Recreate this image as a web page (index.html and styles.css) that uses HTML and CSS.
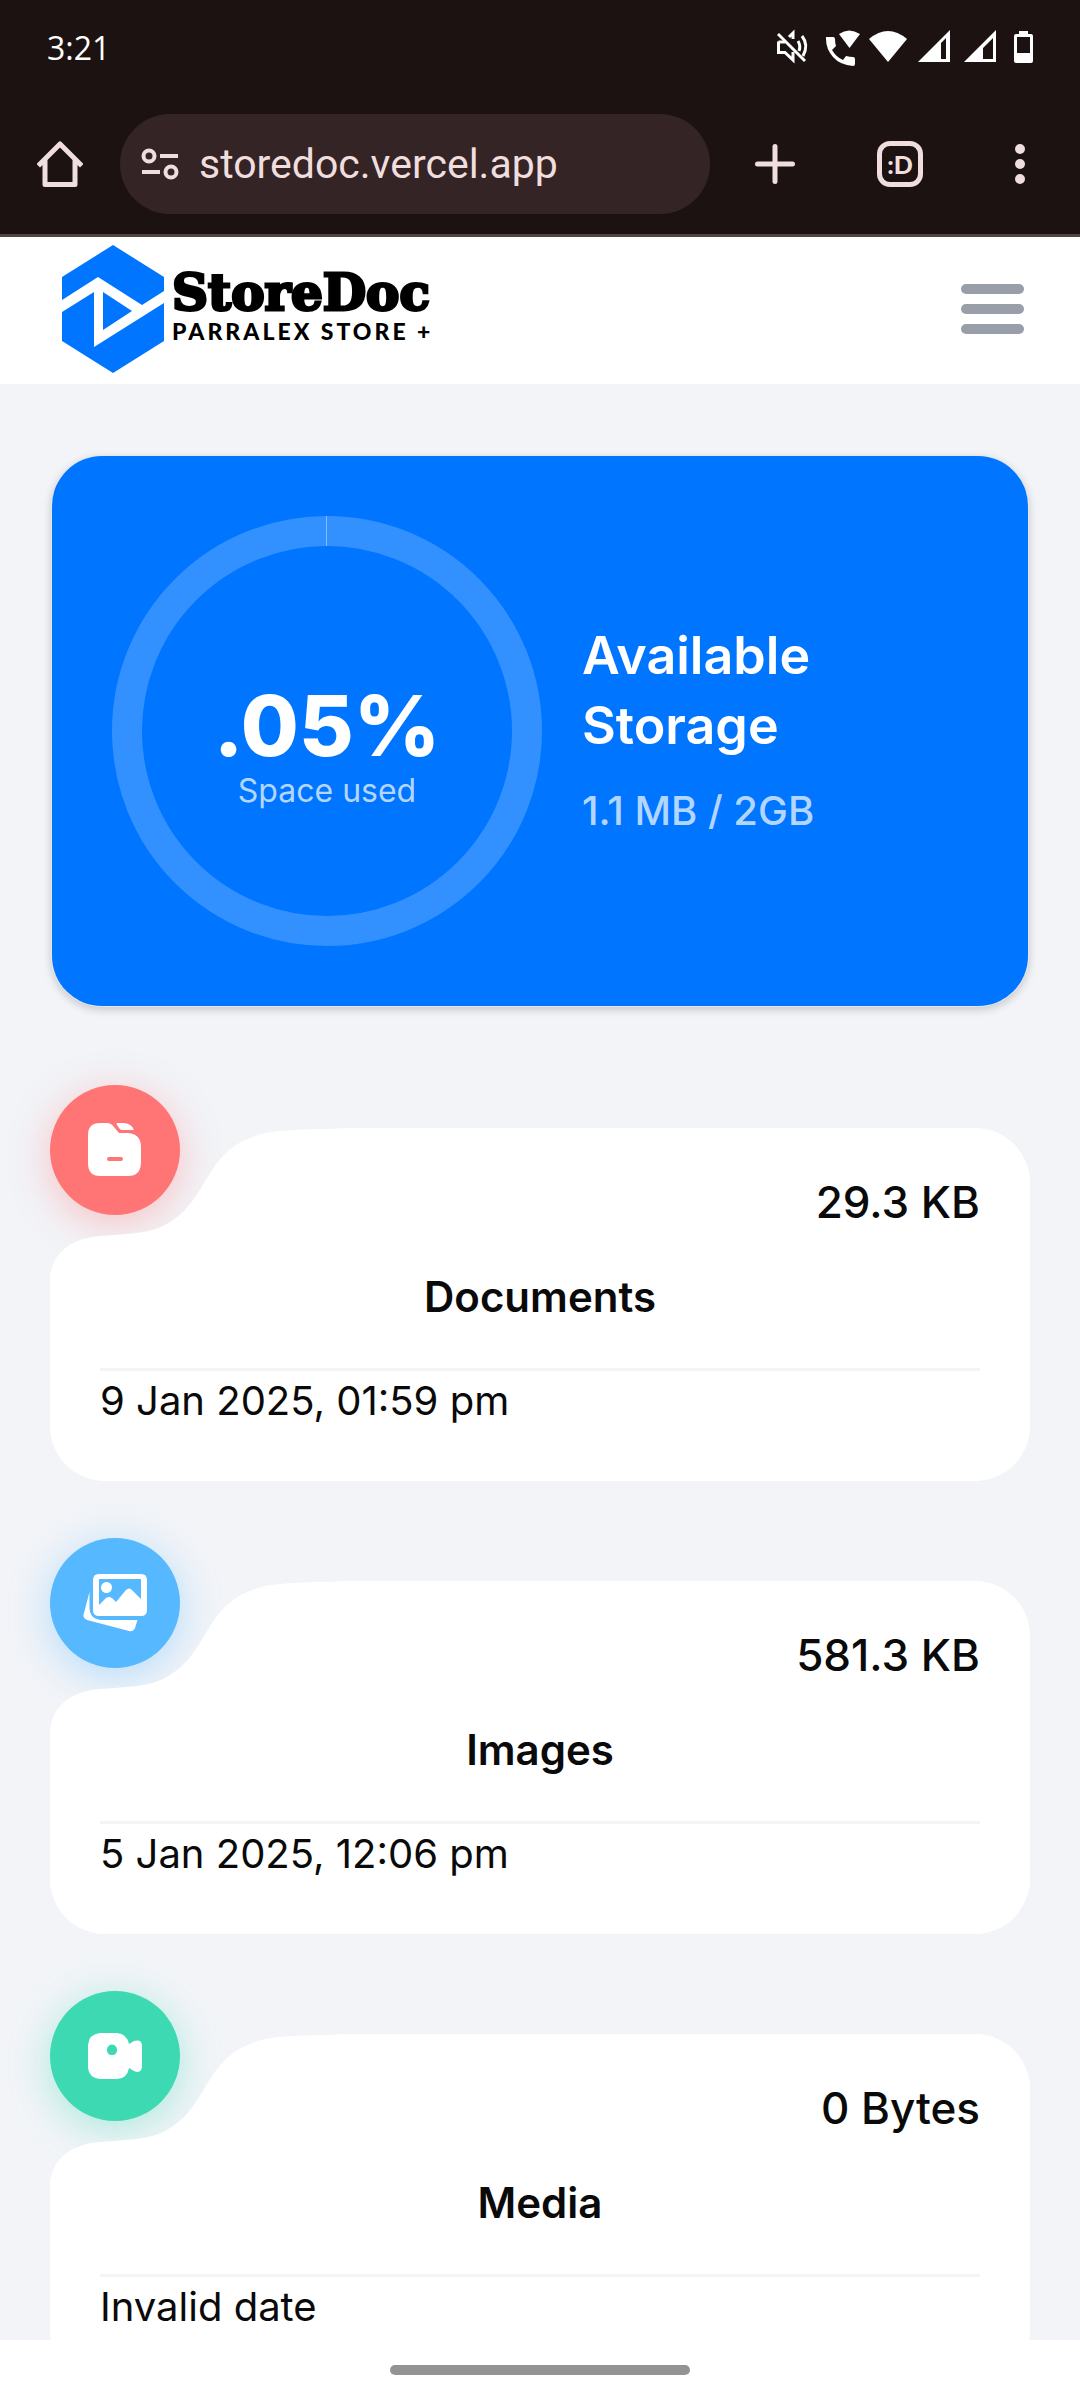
FILE: index.html
```html
<!DOCTYPE html>
<html lang="en">
<head>
<meta charset="utf-8">
<meta name="viewport" content="width=device-width, initial-scale=1">
<title>StoreDoc</title>
<link rel="stylesheet" href="styles.css">
</head>
<body>
<div class="shell">
  <div class="browser">
    <div class="status">
      <span class="clock">3:21</span>
      <svg class="status-icons" width="256" height="38" viewBox="0 0 256 38" fill="#fff" aria-hidden="true">
        <g fill="none" stroke="#fff" stroke-width="3">
          <path d="M1.500 13.500V24.500H8L16 32V24M1.500 14H8M12 9L16 5V11M21 13Q24 18 22 23M25 8Q32 17 26 28"/>
          <path d="M1 6L28 33"/>
        </g>
        <path d="M49 9H56Q58 9 58 11Q58 15 59 18L55 22Q59 29 66 32L69 28Q73 29 76 29Q78 29 78 31V36Q78 38 76 38Q63 37 56 29Q49 21 49 11Z"/>
        <path d="M62 6Q72 -1 83 6L72.500 20Z"/>
        <path d="M92 11Q111 -5 130 11L111 34Z"/>
        <path fill-rule="evenodd" d="M173 2V34H141ZM169 10L164 15V31H169Z"/>
        <path fill-rule="evenodd" d="M219 2V34H187ZM216 10L206 20V31H216Z"/>
        <path fill-rule="evenodd" d="M242 3H251V6H254Q256 6 256 8V33Q256 35 254 35H239Q237 35 237 33V8Q237 6 239 6H242ZM240 9V25H253V9Z"/>
      </svg>
    </div>
    <div class="toolbar">
      <button class="tool home" aria-label="Home">
        <svg width="46" height="46" viewBox="0 0 46 46" fill="none" stroke="#f0dedf" stroke-width="5" stroke-linejoin="round" stroke-linecap="square"><path d="M3 23L23 3L43 23M8 20V43.500H38V20"/></svg>
      </button>
      <div class="omnibox">
        <svg width="38" height="32" viewBox="0 0 38 32" fill="none" stroke="#f0dedf" stroke-width="4" aria-hidden="true"><circle cx="8" cy="8" r="5.500"/><circle cx="30" cy="24" r="5.500"/><path d="M19 8H37M1 24H19"/></svg>
        <input class="url" type="text" aria-label="Address" value="storedoc.vercel.app">
      </div>
      <button class="tool add" aria-label="New tab">
        <svg width="40" height="40" viewBox="0 0 40 40" stroke="#f0dedf" stroke-width="5" stroke-linecap="round"><path d="M20 2.500V37.500M2.500 20H37.500"/></svg>
      </button>
      <button class="tool" aria-label="Tabs"><span class="tabs">:D</span></button>
      <button class="tool" aria-label="More">
        <svg width="10" height="42" viewBox="0 0 10 42" fill="#f0dedf"><circle cx="5" cy="6" r="5"/><circle cx="5" cy="21" r="5"/><circle cx="5" cy="36" r="5"/></svg>
      </button>
    </div>
  </div>

  <div class="page">
    <header class="header">
      <a class="logo" href="#">
        <svg width="102" height="128" viewBox="0 0 102 128" aria-hidden="true">
          <path fill="#0075ff" d="M51 0L102 32V96L51 128L0 96V32Z"/>
          <path fill="#fff" d="M0 55L36 32L80 60L102 46V58L32 102V47L0 67Z"/>
          <path fill="#0075ff" d="M41 47L70 66L41 85Z"/>
        </svg>
        <span class="wordmark">
          <span class="brand">StoreDoc</span>
          <span class="tagline">PARRALEX STORE +</span>
        </span>
      </a>
      <button class="menu" aria-label="Menu"><i></i><i></i><i></i></button>
    </header>

    <main class="main">
      <section class="storage">
        <div class="ring">
          <svg viewBox="0 0 430 430" fill="none" aria-hidden="true">
            <circle cx="215" cy="215" r="200" stroke="#fff" stroke-opacity=".2" stroke-width="30"/>
            <path d="M214.500 0V30" stroke="#fff" stroke-opacity=".4"/>
          </svg>
          <div class="ring-text">
            <strong>.05%</strong>
            <span>Space used</span>
          </div>
        </div>
        <div class="summary">
          <h1>Available Storage</h1>
          <p>1.1 MB / 2GB</p>
        </div>
      </section>

      <a class="card" href="#">
        <span class="badge red">
          <svg width="54" height="54" viewBox="0 0 54 54" aria-hidden="true">
            <path fill="#fff" d="M12 0H19Q23 0 26 4L31 10H40Q53 11 53 24V39Q53 53 40 53H12Q0 53 0 40V12Q0 0 12 0Z"/>
            <path fill="#fff" d="M29 0H36Q44 1 46 7H34Q32 7 31 5L29 2Q28 0 29 0Z"/>
            <path stroke="#ff7474" stroke-width="4" stroke-linecap="round" d="M21 36H33"/>
          </svg>
        </span>
        <span class="shape"><svg width="300" height="353" viewBox="0 0 300 353" aria-hidden="true"><path d="M0 153C0 125 22 110 50 108C90 105 110 106 134 83C158 59 162 22 205 8C224 1 250 2 300 0V353H55A55 55 0 0 1 0 298Z"/></svg><i></i></span>
        <span class="size">29.3 KB</span>
        <span class="name">Documents</span>
        <time class="date">9 Jan 2025, 01:59 pm</time>
      </a>

      <a class="card" href="#">
        <span class="badge blue">
          <svg width="64" height="58" viewBox="0 0 64 58" aria-hidden="true">
            <path fill="#fff" fill-rule="evenodd" d="M16 0H58Q64 0 64 6V36Q64 42 58 42H16Q10 42 10 36V6Q10 0 16 0ZM16 5V31L23 24Q26 22 29 24L33 28L43 16Q46 13 49 16L58 25V5Z"/>
            <circle cx="23.500" cy="13.500" r="5.500" fill="#fff"/>
            <path fill="#fff" d="M6.500 18V33Q6.500 45 18 46H54.500L52 54Q50 58 46 57L4 46Q-1 44 1 39Z"/>
          </svg>
        </span>
        <span class="shape"><svg width="300" height="353" viewBox="0 0 300 353" aria-hidden="true"><path d="M0 153C0 125 22 110 50 108C90 105 110 106 134 83C158 59 162 22 205 8C224 1 250 2 300 0V353H55A55 55 0 0 1 0 298Z"/></svg><i></i></span>
        <span class="size">581.3 KB</span>
        <span class="name">Images</span>
        <time class="date">5 Jan 2025, 12:06 pm</time>
      </a>

      <a class="card" href="#">
        <span class="badge green">
          <svg width="54" height="46" viewBox="0 0 54 46" aria-hidden="true">
            <path fill="#fff" fill-rule="evenodd" d="M12 0H29Q39 1 41 11L46 8Q54 6 54 13V34Q53 41 46 38L41 35Q39 46 29 46H12Q1 45 0 35V12Q1 1 12 0ZM24 11.500Q19 12 19 17Q19 22 24 22Q29 22 29 17Q29 12 24 11.500Z"/>
          </svg>
        </span>
        <span class="shape"><svg width="300" height="353" viewBox="0 0 300 353" aria-hidden="true"><path d="M0 153C0 125 22 110 50 108C90 105 110 106 134 83C158 59 162 22 205 8C224 1 250 2 300 0V353H55A55 55 0 0 1 0 298Z"/></svg><i></i></span>
        <span class="size">0 Bytes</span>
        <span class="name">Media</span>
        <time class="date">Invalid date</time>
      </a>
    </main>
  </div>

  <div class="gesture"><i></i></div>
</div>
</body>
</html>
```
FILE: styles.css
```css
* {
  box-sizing: border-box;
}

body {
  margin: 0;
  font-family: Inter, "Open Sans", sans-serif;
  color: #0a0a0a;
}

button {
  padding: 0;
  border: 0;
  background: none;
}

a {
  color: inherit;
  text-decoration: none;
}

svg {
  display: block;
}

.shell {
  display: flex;
  flex-direction: column;
  height: 100vh;
}

/* Browser chrome */
.browser {
  flex: none;
  background: #1b1211;
  border-bottom: 3px solid #524343;
}

.status {
  display: flex;
  justify-content: space-between;
  align-items: center;
  height: 94px;
  padding: 0 47px;
  color: #fff;
}

.clock {
  font-family: "Open Sans", sans-serif;
  font-size: 32px;
  font-weight: 500;
}

.toolbar {
  display: flex;
  align-items: center;
  height: 140px;
}

.tool {
  display: flex;
  flex: none;
  align-items: center;
  justify-content: center;
  width: 120px;
  height: 100px;
}

.add {
  width: 130px;
}

.omnibox {
  display: flex;
  flex: 1;
  align-items: center;
  gap: 20px;
  min-width: 0;
  height: 100px;
  padding: 0 21px;
  border-radius: 50px;
  background: #352425;
}

.omnibox svg {
  flex: none;
}

.url {
  flex: 1;
  min-width: 0;
  padding: 0;
  border: 0;
  background: none;
  color: #f0dedf;
  font-family: Roboto, sans-serif;
  font-size: 41px;
}

.tabs {
  display: flex;
  align-items: center;
  justify-content: center;
  width: 46px;
  height: 46px;
  border: 5px solid #f0dedf;
  border-radius: 13px;
  color: #f0dedf;
  font-family: Lato, sans-serif;
  font-size: 25px;
  font-weight: 900;
}

/* Page */
.page {
  flex: 1;
  min-height: 0;
  overflow-y: auto;
  scrollbar-width: none;
  background: #f2f4f8;
}

.header {
  display: flex;
  align-items: center;
  justify-content: space-between;
  height: 147px;
  padding: 0 56px 4px 62px;
  background: #fff;
}

.logo {
  display: flex;
  align-items: center;
  gap: 8px;
  color: #000;
}

.wordmark {
  display: flex;
  flex-direction: column;
  padding-bottom: 8px;
  white-space: nowrap;
}

.brand {
  font-family: "DejaVu Serif", serif;
  font-size: 50px;
  font-weight: 700;
  line-height: 52px;
  -webkit-text-stroke: 3px #000;
}

.tagline {
  font-family: Lato, sans-serif;
  font-size: 23px;
  font-weight: 900;
  line-height: 24px;
  letter-spacing: 3px;
}

.menu {
  display: flex;
  flex-direction: column;
  gap: 10px;
}

.menu i {
  width: 63px;
  height: 10px;
  border-radius: 5px;
  background: #989fa8;
}

.main {
  padding: 72px 50px;
}

.storage {
  display: flex;
  align-items: center;
  gap: 40px;
  margin: 0 2px 122px;
  padding: 60px;
  border-radius: 50px;
  background: #0075ff;
  box-shadow: 0 0 0 1px #e6e7ea, 0 3px 8px 1px rgba(0, 0, 0, .18);
  color: #fff;
}

.ring {
  display: grid;
  flex: none;
  width: 430px;
}

.ring > * {
  grid-area: 1 / 1;
}

.ring-text {
  display: flex;
  flex-direction: column;
  align-items: center;
  justify-content: center;
  padding-top: 30px;
}

.ring-text strong {
  font-size: 84px;
  font-weight: 800;
  line-height: 90px;
}

.ring-text span {
  color: #b3d6ff;
  font-size: 32px;
  line-height: 40px;
}

.summary h1 {
  max-width: 300px;
  margin: 0 0 20px;
  font-size: 52px;
  font-weight: 600;
  line-height: 70px;
}

.summary p {
  margin: 0;
  color: #b3d6ff;
  font-size: 40px;
  font-weight: 500;
  line-height: 60px;
}

/* Category cards */
.card {
  position: relative;
  isolation: isolate;
  display: flex;
  flex-direction: column;
  margin-bottom: 100px;
  padding: 44px 50px 50px;
}

.shape {
  position: absolute;
  inset: 0;
  z-index: -1;
  display: flex;
}

.shape svg {
  flex: none;
  fill: #fff;
}

.shape i {
  flex: 1;
  border-radius: 0 55px 55px 0;
  background: #fff;
}

.badge {
  position: absolute;
  top: -43px;
  left: 0;
  z-index: -2;
  display: flex;
  align-items: center;
  justify-content: center;
  width: 130px;
  height: 130px;
  border-radius: 50%;
}

.red {
  background: #ff7474;
  box-shadow: 0 8px 40px rgba(255, 116, 116, .4);
}

.blue {
  background: #56b8ff;
  box-shadow: 0 8px 40px rgba(86, 184, 255, .4);
}

.green {
  background: #3dd9b3;
  box-shadow: 0 8px 40px rgba(61, 217, 179, .4);
}

.size {
  align-self: flex-end;
  font-size: 44px;
  font-weight: 500;
  line-height: 60px;
}

.name {
  margin: 35px 0 41px;
  font-size: 42px;
  font-weight: 600;
  line-height: 60px;
  text-align: center;
}

.date {
  border-top: 3px solid #f2f4f8;
  font-size: 40px;
  line-height: 60px;
}

.gesture {
  display: flex;
  flex: none;
  align-items: center;
  justify-content: center;
  height: 60px;
  background: #fff;
}

.gesture i {
  width: 300px;
  height: 10px;
  border-radius: 5px;
  background: #939393;
}
```
